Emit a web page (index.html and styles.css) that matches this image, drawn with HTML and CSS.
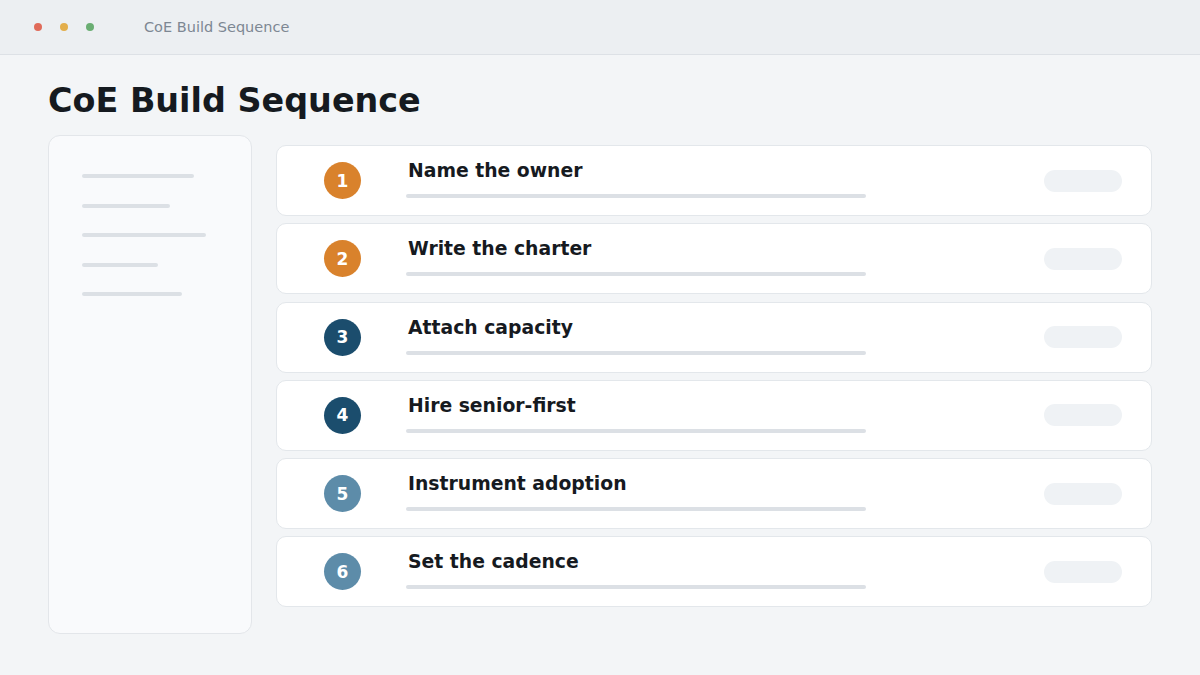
FILE: index.html
```html
<!DOCTYPE html>
<html lang="en">
<head>
<meta charset="utf-8">
<title>CoE Build Sequence</title>
<link rel="stylesheet" href="styles.css">
</head>
<body>
<div class="window">
  <header class="titlebar">
    <div class="dots">
      <span class="dot red"></span>
      <span class="dot yellow"></span>
      <span class="dot green"></span>
    </div>
    <span class="titlebar-text">CoE Build Sequence</span>
  </header>
  <main class="content">
    <h1 class="heading">CoE Build Sequence</h1>
    <div class="body">
      <aside class="sidebar">
        <span class="sline" style="width:112px"></span>
        <span class="sline" style="width:88px"></span>
        <span class="sline" style="width:124px"></span>
        <span class="sline" style="width:76px"></span>
        <span class="sline" style="width:100px"></span>
      </aside>
      <section class="steps">
        <div class="step">
          <span class="num orange">1</span>
          <div class="info"><div class="step-title">Name the owner</div><div class="bar"></div></div>
          <span class="pill"></span>
        </div>
        <div class="step">
          <span class="num orange">2</span>
          <div class="info"><div class="step-title">Write the charter</div><div class="bar"></div></div>
          <span class="pill"></span>
        </div>
        <div class="step">
          <span class="num navy">3</span>
          <div class="info"><div class="step-title">Attach capacity</div><div class="bar"></div></div>
          <span class="pill"></span>
        </div>
        <div class="step">
          <span class="num navy">4</span>
          <div class="info"><div class="step-title">Hire senior-first</div><div class="bar"></div></div>
          <span class="pill"></span>
        </div>
        <div class="step">
          <span class="num steel">5</span>
          <div class="info"><div class="step-title">Instrument adoption</div><div class="bar"></div></div>
          <span class="pill"></span>
        </div>
        <div class="step">
          <span class="num steel">6</span>
          <div class="info"><div class="step-title">Set the cadence</div><div class="bar"></div></div>
          <span class="pill"></span>
        </div>
      </section>
    </div>
  </main>
</div>
</body>
</html>
```
FILE: styles.css
```css
* { box-sizing: border-box; }
html, body {
  margin: 0;
  padding: 0;
  width: 1200px;
  height: 675px;
  overflow: hidden;
  background: #f3f5f7;
  font-family: "DejaVu Sans", "Liberation Sans", sans-serif;
}
.window {
  display: flex;
  flex-direction: column;
  height: 675px;
}
.titlebar {
  height: 55px;
  background: #eceff2;
  border-bottom: 1px solid #dde1e6;
  display: flex;
  align-items: center;
  padding-left: 34px;
}
.dots {
  display: flex;
  gap: 18px;
}
.dot {
  width: 8px;
  height: 8px;
  border-radius: 50%;
  display: block;
}
.dot.red { background: #e06b5a; }
.dot.yellow { background: #e3ae4b; }
.dot.green { background: #6aae73; }
.titlebar-text {
  margin-left: 50px;
  font-size: 14.5px;
  color: #7d8793;
}
.content {
  flex: 1;
  padding: 0 48px;
}
.heading {
  margin: 27px 0 0;
  font-size: 33.4px;
  line-height: 38px;
  font-weight: 700;
  color: #151a20;
}
.body {
  display: flex;
  gap: 24px;
  margin-top: 15px;
  align-items: flex-start;
}
.sidebar {
  width: 204px;
  height: 499px;
  background: #f9fafc;
  border: 1px solid #e3e6ea;
  border-radius: 12px;
  padding: 38px 33px;
  display: flex;
  flex-direction: column;
  gap: 25.5px;
}
.sline {
  display: block;
  height: 4px;
  border-radius: 2px;
  background: #dce0e5;
}
.steps {
  flex: 1;
  margin-top: 10px;
  display: flex;
  flex-direction: column;
  gap: 7.3px;
}
.step {
  height: 71px;
  background: #ffffff;
  border: 1px solid #e3e7eb;
  border-radius: 10px;
  display: flex;
  align-items: center;
  padding: 0 29px 0 47px;
}
.num {
  width: 37px;
  height: 37px;
  border-radius: 50%;
  flex: none;
  display: flex;
  align-items: center;
  justify-content: center;
  color: #ffffff;
  font-weight: 700;
  font-size: 17px;
}
.num.orange { background: #d9822c; }
.num.navy { background: #1b4d6d; }
.num.steel { background: #5d8ca9; }
.info {
  margin-left: 47px;
  flex: 1;
  padding-bottom: 4px;
}
.step-title {
  font-size: 18.8px;
  line-height: 23px;
  font-weight: 700;
  color: #161a1f;
}
.bar {
  width: 460px;
  height: 4px;
  border-radius: 2px;
  background: #dce0e5;
  margin-top: 12px;
  margin-left: -2px;
}
.pill {
  width: 78px;
  height: 22px;
  border-radius: 11px;
  background: #eff2f5;
  flex: none;
}
```
